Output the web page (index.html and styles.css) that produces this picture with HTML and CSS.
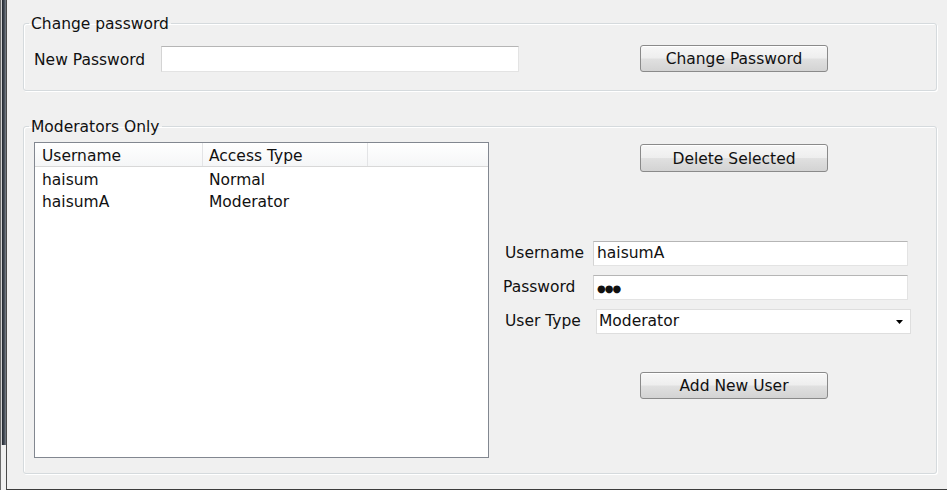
FILE: index.html
```html
<!DOCTYPE html>
<html>
<head>
<meta charset="utf-8">
<link rel="stylesheet" href="styles.css">
</head>
<body>
<div class="edge"><div class="edge-shade"></div></div>
<main class="main">
  <fieldset class="group group-pw">
    <legend>Change password</legend>
    <div class="pw-row">
      <span class="pw-label">New Password</span>
      <div class="field pw-field"></div>
      <button class="btn pw-btn">Change Password</button>
    </div>
  </fieldset>
  <fieldset class="group group-mod">
    <legend>Moderators Only</legend>
    <div class="mod-body">
      <div class="table">
        <div class="thead">
          <div class="th c1">Username</div>
          <div class="th c2">Access Type</div>
          <div class="th c3"></div>
        </div>
        <div class="tr">
          <div class="td c1">haisum</div>
          <div class="td c2">Normal</div>
        </div>
        <div class="tr">
          <div class="td c1">haisumA</div>
          <div class="td c2">Moderator</div>
        </div>
      </div>
      <div class="side">
        <button class="btn del-btn">Delete Selected</button>
        <div class="form">
          <span class="flabel l-user">Username</span>
          <div class="field ffield">haisumA</div>
          <span class="flabel">Password</span>
          <div class="field ffield"><span class="dots">●●●</span></div>
          <span class="flabel l-user">User Type</span>
          <div class="field combo">
            <span>Moderator</span>
            <svg class="arrow" width="7" height="4" viewBox="0 0 7 4"><polygon points="0,0 7,0 3.5,4" fill="#000"/></svg>
          </div>
        </div>
        <button class="btn add-btn">Add New User</button>
      </div>
    </div>
  </fieldset>
</main>
</body>
</html>
```
FILE: styles.css
```css
* { box-sizing: border-box; }
html, body { margin: 0; height: 490px; overflow: hidden; }
body {
  display: flex;
  background: #f0f0f0;
  font-family: "DejaVu Sans", "Liberation Sans", sans-serif;
  font-size: 15.5px;
  color: #111;
}
.edge {
  width: 6px;
  height: 490px;
  border-left: 1px solid #6a6a6a;
  background: #f0f0f0;
}
.edge-shade {
  height: 445px;
  background: linear-gradient(90deg, #d0d0d0 0, #d0d0d0 1px, #22272f 1px, #3f4650 3px, #7c838c 5px);
}
.main {
  flex: 1;
  height: 490px;
  border-left: 1px solid #4a4a4a;
  border-bottom: 1px solid #3c3c3c;
  padding: 0 10px 0 16px;
}
.group {
  margin: 0;
  padding: 0;
  min-width: 0;
  border: 1px solid #d5dadd;
  border-radius: 3px;
  box-shadow: inset 1px 1px 0 #fff, 1px 1px 0 #fff;
}
.group legend {
  margin-left: 5px;
  padding: 1px 2px 0;
  line-height: 18px;
  height: 18px;
}
.group-pw { margin-top: 14px; }
.pw-row {
  display: flex;
  align-items: center;
  padding: 13px 0 18px 10px;
}
.pw-label { width: 127px; padding-top: 2px; }
.field {
  background: #fff;
  border: 1px solid;
  border-color: #b5b5b5 #e3e3e3 #e3e3e3 #d4d4d4;
}
.pw-field { width: 358px; height: 26px; }
.btn {
  font-family: inherit;
  font-size: 15.5px;
  color: #111;
  width: 188px;
  height: 27px;
  padding: 1px 0 0;
  border: 1px solid #8a8a8a;
  border-radius: 3px;
  background: linear-gradient(#f7f7f7 0%, #eeeeee 48%, #e0e0e0 52%, #d3d3d3 100%);
  box-shadow: inset 0 1px 0 #fff;
}
.pw-btn { margin-left: 121px; }
.group-mod { margin-top: 26px; }
.mod-body {
  display: flex;
  padding: 7px 0 15px 10px;
}
.table {
  width: 455px;
  height: 316px;
  border: 1px solid #828790;
  background: #fff;
}
.thead {
  display: flex;
  height: 24px;
  background: linear-gradient(#ffffff, #f5f6f7);
  border-bottom: 1px solid #d8d8d8;
}
.th {
  line-height: 22px;
  padding: 2px 0 0 7px;
  border-right: 1px solid #e3e4e6;
}
.th.c3 { border-right: 0; flex: 1; }
.c1 { width: 168px; }
.c2 { width: 165px; padding-left: 6px; }
.tr {
  display: flex;
  height: 22px;
  line-height: 22px;
}
.thead + .tr { margin-top: 2px; }
.td { padding-left: 7px; }
.td.c2 { padding-left: 6px; }
.side {
  display: flex;
  flex-direction: column;
  padding: 2px 0 0 14px;
}
.del-btn { margin-left: 137px; height: 28px; }
.add-btn { margin-left: 137px; margin-top: 38px; }
.form {
  margin-top: 69px;
  display: grid;
  grid-template-columns: 90px 315px;
  grid-auto-rows: 25px;
  row-gap: 9px;
  align-items: center;
}
.flabel { line-height: 25px; }
.l-user { padding-left: 2px; }
.ffield {
  height: 25px;
  line-height: 23px;
  padding-left: 3px;
  overflow: hidden;
}
.dots { font-size: 10px; letter-spacing: -1px; }
.combo {
  margin-left: 3px;
  width: 315px;
  height: 25px;
  line-height: 23px;
  padding: 0 7px 0 2px;
  display: flex;
  align-items: center;
  justify-content: space-between;
  border-color: #dedede;
}
.arrow { display: block; }
```
